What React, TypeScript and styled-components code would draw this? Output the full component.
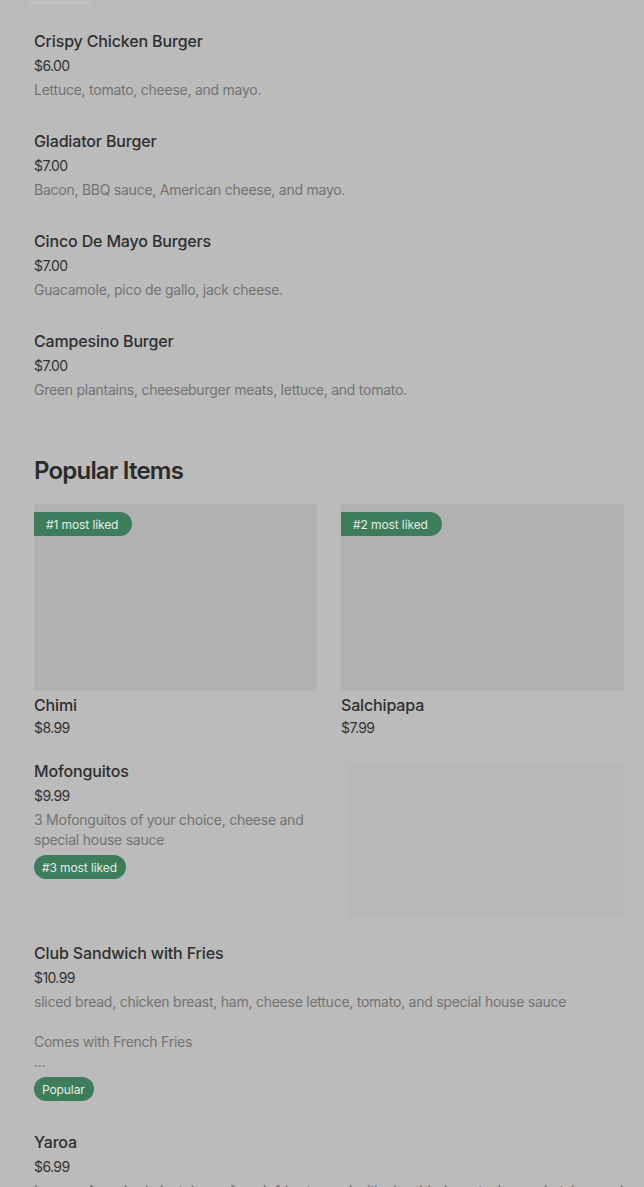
import styled, { createGlobalStyle } from "styled-components";

const GlobalStyle = createGlobalStyle`
  body {
    margin: 0;
    background: #bbbbbb;
    font-family: Inter, "Noto Sans", "Liberation Sans", sans-serif;
    color: #2f2f2f;
  }
`;

const Page = styled.div`
  padding: 0 20px 0 34px;
  overflow: hidden;
  height: 1187px;
`;

const TopEdge = styled.div`
  width: 64px;
  height: 2px;
  margin: 2px 0 0 -6px;
  background: #c3c3c3;
  border-radius: 1px;
`;

const ItemList = styled.div`
  display: flex;
  flex-direction: column;
  gap: 31px;
  margin-top: 27px;
`;

const Item = styled.div`
  display: flex;
  flex-direction: column;
`;

const Title = styled.div`
  font-size: 16px;
  font-weight: 500;
  line-height: 20px;
  color: #2f2f2f;
  letter-spacing: -0.15px;
`;

const Price = styled.div<{ $tight?: boolean }>`
  font-size: 14px;
  line-height: 20px;
  margin-top: ${(p) => (p.$tight ? "3px" : "5px")};
  color: #333333;
  letter-spacing: -0.6px;
`;

const Desc = styled.div`
  font-size: 14px;
  line-height: 20px;
  margin-top: 4px;
  color: #737373;
  white-space: pre-line;
  letter-spacing: -0.25px;
`;

const SectionTitle = styled.h2`
  margin: 55px 0 0;
  font-size: 24px;
  font-weight: 600;
  line-height: 32px;
  letter-spacing: -0.8px;
  color: #2b2b2b;
`;

const CardGrid = styled.div`
  display: grid;
  grid-template-columns: 283px 283px;
  gap: 24px;
  margin-top: 17px;
`;

const Card = styled.div`
  display: flex;
  flex-direction: column;
`;

const CardImage = styled.div`
  position: relative;
  height: 187px;
  background: #b1b1b1;
`;

const Badge = styled.span<{ $flush?: boolean }>`
  display: inline-flex;
  align-items: center;
  height: 24px;
  padding: ${(p) => (p.$flush ? "0 14px 0 12px" : "0 9px 0 8px")};
  background: #3d7d5b;
  color: #e3eee7;
  font-size: 12px;
  border-radius: ${(p) => (p.$flush ? "0 12px 12px 0" : "12px")};
  letter-spacing: -0.1px;
`;

const CornerBadge = styled(Badge)`
  position: absolute;
  top: 8px;
  left: 0;
`;

const CardName = styled(Title)`
  margin-top: 4px;
`;

const FeatureRow = styled.div`
  display: flex;
  justify-content: space-between;
  margin-top: 23px;
`;

const FeatureText = styled.div`
  display: flex;
  flex-direction: column;
  align-items: flex-start;
  width: 290px;
`;

const FeatureImage = styled.div`
  width: 277px;
  height: 155px;
  margin-top: 2px;
  background: #b8b8b8;
`;

const BadgeRow = styled.div`
  margin-top: 5px;
`;

const LowerList = styled(ItemList)`
  margin-top: 25px;
`;

const menu = [
  { name: "Crispy Chicken Burger", price: "$6.00", desc: "Lettuce, tomato, cheese, and mayo." },
  { name: "Gladiator Burger", price: "$7.00", desc: "Bacon, BBQ sauce, American cheese, and mayo." },
  { name: "Cinco De Mayo Burgers", price: "$7.00", desc: "Guacamole, pico de gallo, jack cheese." },
  { name: "Campesino Burger", price: "$7.00", desc: "Green plantains, cheeseburger meats, lettuce, and tomato." },
];

const popular = [
  { rank: "#1 most liked", name: "Chimi", price: "$8.99" },
  { rank: "#2 most liked", name: "Salchipapa", price: "$7.99" },
];

export default function App() {
  return (
    <>
      <GlobalStyle />
      <Page>
        <TopEdge />
        <ItemList>
          {menu.map((m) => (
            <Item key={m.name}>
              <Title>{m.name}</Title>
              <Price>{m.price}</Price>
              <Desc>{m.desc}</Desc>
            </Item>
          ))}
        </ItemList>

        <SectionTitle>Popular Items</SectionTitle>
        <CardGrid>
          {popular.map((p) => (
            <Card key={p.name}>
              <CardImage>
                <CornerBadge $flush>{p.rank}</CornerBadge>
              </CardImage>
              <CardName>{p.name}</CardName>
              <Price $tight>{p.price}</Price>
            </Card>
          ))}
        </CardGrid>

        <FeatureRow>
          <FeatureText>
            <Title>Mofonguitos</Title>
            <Price>$9.99</Price>
            <Desc>3 Mofonguitos of your choice, cheese and special house sauce</Desc>
            <BadgeRow>
              <Badge>#3 most liked</Badge>
            </BadgeRow>
          </FeatureText>
          <FeatureImage />
        </FeatureRow>

        <LowerList>
          <Item>
            <Title>Club Sandwich with Fries</Title>
            <Price>$10.99</Price>
            <Desc>{"sliced bread, chicken breast, ham, cheese lettuce, tomato, and special house sauce\n\nComes with French Fries\n..."}</Desc>
            <BadgeRow>
              <Badge>Popular</Badge>
            </BadgeRow>
          </Item>
          <Item>
            <Title>Yaroa</Title>
            <Price>$6.99</Price>
            <Desc>Layers of mashed plantains or french fries topped with shredded meat, cheese, ketchup and mayo</Desc>
          </Item>
        </LowerList>
      </Page>
    </>
  );
}
